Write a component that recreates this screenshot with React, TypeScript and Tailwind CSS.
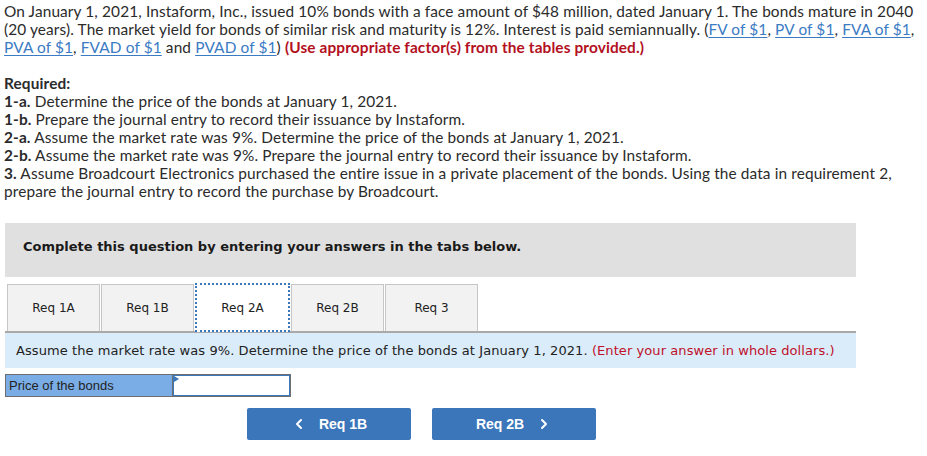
import { ChevronLeft, ChevronRight } from 'lucide-react';

const tabs = ['Req 1A', 'Req 1B', 'Req 2A', 'Req 2B', 'Req 3'];

function Link({ children }: { children: string }) {
  return <span className="text-[#3b7bc4] underline underline-offset-2">{children}</span>;
}

export default function App() {
  return (
    <div className="w-[927px] h-[456px] bg-white text-[#2b2b2b] overflow-hidden">
      <div className="px-[4px] pt-[2px] font-['Lato',sans-serif] text-[15.4px] tracking-[0.12px] leading-[18px] whitespace-nowrap">
        <p>
          On January 1, 2021, Instaform, Inc., issued 10% bonds with a face amount of $48 million, dated January 1. The bonds mature in 2040
          <br />
          (20 years). The market yield for bonds of similar risk and maturity is 12%. Interest is paid semiannually. (<Link>FV of $1</Link>,{' '}
          <Link>PV of $1</Link>, <Link>FVA of $1</Link>,
          <br />
          <Link>PVA of $1</Link>, <Link>FVAD of $1</Link> and <Link>PVAD of $1</Link>){' '}
          <span className="font-bold text-[#b3101e]">(Use appropriate factor(s) from the tables provided.)</span>
        </p>

        <div className="mt-[18px]">
          <p className="font-bold">Required:</p>
          <p><b>1-a.</b> Determine the price of the bonds at January 1, 2021.</p>
          <p><b>1-b.</b> Prepare the journal entry to record their issuance by Instaform.</p>
          <p><b>2-a.</b> Assume the market rate was 9%. Determine the price of the bonds at January 1, 2021.</p>
          <p><b>2-b.</b> Assume the market rate was 9%. Prepare the journal entry to record their issuance by Instaform.</p>
          <p>
            <b>3.</b> Assume Broadcourt Electronics purchased the entire issue in a private placement of the bonds. Using the data in requirement 2,
            <br />
            prepare the journal entry to record the purchase by Broadcourt.
          </p>
        </div>
      </div>

      <div className="ml-[5px] w-[851px] font-['DejaVu_Sans',Verdana,sans-serif]">
        <div className="mt-[23px] h-[54px] bg-[#e0e0e0] pt-[14px] pl-[18px] text-[13px] font-bold text-[#1a1a1a]">
          Complete this question by entering your answers in the tabs below.
        </div>

        <div className="mt-[6px] flex gap-[1px] pl-[2px] items-end">
          {tabs.map((t, i) =>
            i === 2 ? (
              <div
                key={t}
                className="w-[95px] h-[49px] -mb-[1px] bg-white border-[2px] border-dotted border-[#3b77bd] flex items-center justify-center text-[12px] text-[#222]"
              >
                {t}
              </div>
            ) : (
              <div
                key={t}
                className="w-[93px] h-[47px] bg-[#f2f2f2] border border-[#c6c6c6] border-b-0 flex items-center justify-center text-[12px] text-[#222]"
              >
                {t}
              </div>
            )
          )}
        </div>

        <div className="border-t-[2px] border-[#a9a9a9] bg-[#daecf9] h-[37px] flex items-center pl-[11px] text-[13px] tracking-[0.08px] text-[#222]">
          Assume the market rate was 9%. Determine the price of the bonds at January 1, 2021.&nbsp;
          <span className="text-[#c0102a]">(Enter your answer in whole dollars.)</span>
        </div>

        <div className="mt-[6px] flex h-[23px] font-['Liberation_Sans',Arial,sans-serif] text-[13px]">
          <div className="w-[168px] bg-[#7aade6] border border-[#6e6e6e] flex items-center pl-[3px] text-[#222]">
            Price of the bonds
          </div>
          <div className="relative w-[118px] border border-[#6e6e6e] border-l-0 bg-white">
            <div className="absolute inset-0 border border-[#3b77bd]" />
            <div className="absolute left-[1px] top-[1px] w-0 h-0 border-y-[3px] border-y-transparent border-l-[5px] border-l-[#3b77bd]" />
          </div>
        </div>

        <div className="mt-[11px] flex gap-[21px] pl-[242px] font-['Liberation_Sans',Arial,sans-serif]">
          <button className="w-[164px] h-[32px] bg-[#3a76b9] rounded-[2px] text-white text-[14px] font-bold flex items-center justify-center gap-[12px]">
            <ChevronLeft className="w-[16px] h-[16px]" strokeWidth={3} />
            Req 1B
          </button>
          <button className="w-[164px] h-[32px] bg-[#3a76b9] rounded-[2px] text-white text-[14px] font-bold flex items-center justify-center gap-[12px]">
            Req 2B
            <ChevronRight className="w-[16px] h-[16px]" strokeWidth={3} />
          </button>
        </div>
      </div>
    </div>
  );
}
